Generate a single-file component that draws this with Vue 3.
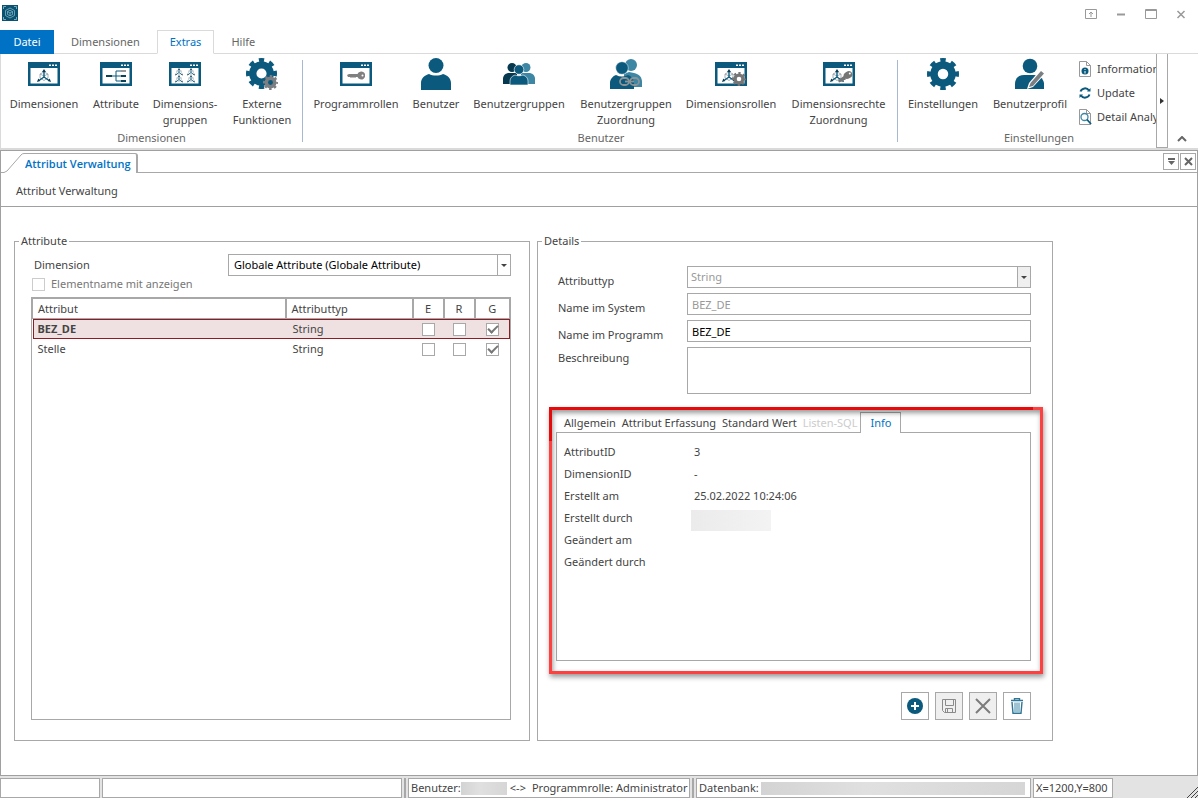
<script setup>
  import {ref} from 'vue';

  // ===Ribbon===
  const menu = ["Dimensionen", "Extras", "Hilfe"];
  const activeMenu = ref("Extras");

  const groups = [
    {
      key:"dim", title:"Dimensionen",
      items:[
        {icon:"win-axes", lines:["Dimensionen"]},
        {icon:"win-tree", lines:["Attribute"]},
        {icon:"win-group", lines:["Dimensions-", "gruppen"]},
        {icon:"gears", lines:["Externe", "Funktionen"]}
      ]
    },
    {
      key:"user", title:"Benutzer",
      items:[
        {icon:"win-key", lines:["Programmrollen"]},
        {icon:"user", lines:["Benutzer"]},
        {icon:"users", lines:["Benutzergruppen"]},
        {icon:"users-link", lines:["Benutzergruppen", "Zuordnung"]},
        {icon:"win-axes-gear", lines:["Dimensionsrollen"]},
        {icon:"win-axes-key", lines:["Dimensionsrechte", "Zuordnung"]}
      ]
    },
    {
      key:"set", title:"Einstellungen",
      items:[
        {icon:"gear", lines:["Einstellungen"]},
        {icon:"user-edit", lines:["Benutzerprofil"]}
      ],
      small:[
        {icon:"doc-info", text:"Information"},
        {icon:"refresh", text:"Update"},
        {icon:"doc-search", text:"Detail Analyse"}
      ]
    }
  ];

  // ===Attribute===
  const dimension = ref("Globale Attribute (Globale Attribute)");
  const showElementName = ref(false);
  const attributes = ref([
    {name:"BEZ_DE", type:"String", e:false, r:false, g:true},
    {name:"Stelle", type:"String", e:false, r:false, g:true}
  ]);
  const selected = ref("BEZ_DE");

  // ===Details===
  const attributeType = ref("String");
  const systemName = ref("BEZ_DE");
  const programName = ref("BEZ_DE");
  const description = ref("");

  const tabs = ["Allgemein", "Attribut Erfassung", "Standard Wert", "Listen-SQL", "Info"];
  const activeTab = ref("Info");
  const info = [
    {label:"AttributID", value:"3"},
    {label:"DimensionID", value:"-"},
    {label:"Erstellt am", value:"25.02.2022 10:24:06"},
    {label:"Erstellt durch", masked:true},
    {label:"Geändert am", value:""},
    {label:"Geändert durch", value:""}
  ];
</script>

<template>
  <!-- icon set -->
  <svg class="sprite" width="0" height="0" aria-hidden="true">
    <symbol id="axes" viewBox="0 0 16 14">
      <path d="M8 3l4 2v4l-4 2.500L4 9V5zM4 5l4 2 4-2" fill="none" stroke="#8a9aa2" stroke-width=".8"/>
      <path d="M8 8V2M8 8l-5 3.500M8 8l5 3.500" fill="none" stroke="#0b5a7d" stroke-width="1.400"/>
      <path d="M8 0l2 3H6zM1 13l1.300-3.500 2 2.500zM15 13l-1.300-3.500-2 2.500z" fill="#0b3a50"/>
    </symbol>
    <symbol id="win" viewBox="0 0 32 32">
      <path d="M0 4h32v24H0z" fill="#0b5a7d"/>
      <path d="M2.500 10h27v15.500h-27z" fill="#fff"/>
      <path d="M21 6.500h2v1.500h-2zM24 6.500h2v1.500h-2zM27 6.500h2v1.500h-2z" fill="#fff"/>
    </symbol>
    <symbol id="key" viewBox="0 0 18 9">
      <path d="M0 4l2-1h8.500A4 4 0 1 1 10.500 6H9L8 7 7 6 6 7 5 6 4 7 3 6H1z" fill="#808080"/>
      <circle cx="15.500" cy="4.500" r="1" fill="#fff"/>
    </symbol>
    <symbol id="gear-shape" viewBox="0 0 32 32">
      <circle cx="16" cy="16" r="9" fill="none" stroke="currentColor" stroke-width="7.500"/>
      <circle cx="16" cy="16" r="13.500" fill="none" stroke="currentColor" stroke-width="5" pathLength="16" stroke-dasharray="1 1" stroke-dashoffset=".5"/>
    </symbol>
    <symbol id="win-axes" viewBox="0 0 32 32">
      <use href="#win"/>
      <use href="#axes" x="8" y="11" width="16" height="14"/>
    </symbol>
    <symbol id="win-tree" viewBox="0 0 32 32">
      <use href="#win"/>
      <path d="M6 17h6v2H6zM21 17h5v2h-5zM21 22h5v2h-5z" fill="#0b4258"/>
      <path d="M21 12h5v2h-5z" fill="#999"/>
      <path d="M12 18h9M21 13h-5v10h5" fill="none" stroke="#0b5a7d"/>
    </symbol>
    <symbol id="win-group" viewBox="0 0 32 32">
      <use href="#win"/>
      <use href="#axes" x="5" y="10" width="10" height="8"/>
      <use href="#axes" x="17" y="10" width="10" height="8"/>
      <use href="#axes" x="5" y="17" width="10" height="8"/>
      <use href="#axes" x="17" y="17" width="10" height="8"/>
    </symbol>
    <symbol id="gears" viewBox="0 0 32 32">
      <use href="#gear-shape" width="31" height="31" color="#0b5a7d"/>
      <circle cx="24.500" cy="24" r="5" fill="#0b5a7d"/>
      <use href="#gear-shape" x="17" y="17" width="15" height="15" color="#7b7f82"/>
    </symbol>
    <symbol id="win-key" viewBox="0 0 32 32">
      <use href="#win"/>
      <use href="#key" x="7" y="13" width="18" height="9"/>
    </symbol>
    <symbol id="user" viewBox="0 0 32 32">
      <circle cx="16" cy="7.500" r="7.500" fill="#0b5a7d"/>
      <path d="M1 32v-7c0-5 4-8 8-9 4 2 10 2 14 0 4 1 8 4 8 9v7z" fill="#0b5a7d"/>
    </symbol>
    <symbol id="users" viewBox="0 0 32 32">
      <circle cx="9" cy="9.500" r="4.500" fill="#063850"/>
      <circle cx="23" cy="9.500" r="4.500" fill="#3d86a4"/>
      <path d="M0 26v-5c0-4 3-6 6-6h8v11z" fill="#063850"/>
      <path d="M32 26v-5c0-4-3-6-6-6h-8v11z" fill="#3d86a4"/>
      <circle cx="16" cy="11.500" r="4.800" fill="#0b5a7d" stroke="#fff" stroke-width=".6"/>
      <path d="M7 27v-4c0-3 2-5 5-6 2 1 6 1 8 0 3 1 5 3 5 6v4z" fill="#0b5a7d" stroke="#fff" stroke-width=".6"/>
    </symbol>
    <symbol id="users-link" viewBox="0 0 32 32">
      <circle cx="21" cy="7" r="6" fill="#3d86a4"/>
      <path d="M14 29V16l5-2 5 1c5 1 8 4 8 9v5z" fill="#3d86a4"/>
      <circle cx="12" cy="10" r="6.300" fill="#0b5a7d" stroke="#fff" stroke-width=".5"/>
      <path d="M0 31v-6c0-4 3-7 6-8 4 2 8 2 12 0 3 1 6 4 6 8v6z" fill="#0b5a7d"/>
      <rect x="10" y="20" width="9" height="7" rx="3.500" fill="none" stroke="#8b9396" stroke-width="1.800"/>
      <rect x="20" y="20" width="9" height="7" rx="3.500" fill="none" stroke="#8b9396" stroke-width="1.800"/>
      <path d="M15 23.500h9" stroke="#8b9396" stroke-width="1.800"/>
    </symbol>
    <symbol id="win-axes-gear" viewBox="0 0 32 32">
      <use href="#win"/>
      <use href="#axes" x="6" y="11" width="16" height="14"/>
      <circle cx="24" cy="21" r="5" fill="#fff"/>
      <use href="#gear-shape" x="17" y="14" width="14" height="14" color="#757575"/>
    </symbol>
    <symbol id="win-axes-key" viewBox="0 0 32 32">
      <use href="#win"/>
      <use href="#axes" x="6" y="11" width="16" height="14"/>
      <path d="M15 22.500l7-5.500 2.500 3-2 .5v1.500h-2v1.500h-2L16 24.500z" fill="#757575"/>
      <ellipse cx="25" cy="17" rx="4.500" ry="3.600" transform="rotate(-30 25 17)" fill="#757575"/>
      <circle cx="26.800" cy="15.600" r="1" fill="#fff"/>
    </symbol>
    <symbol id="gear" viewBox="0 0 32 32">
      <use href="#gear-shape" color="#0b5a7d"/>
    </symbol>
    <symbol id="user-edit" viewBox="0 0 32 32">
      <circle cx="16" cy="8" r="7.300" fill="#0b5a7d"/>
      <path d="M1 31v-5c0-6 4-9 9-9h10c5 0 9 3 10 8v6z" fill="#0b5a7d"/>
      <path d="M13 31l2-6L27 11l5 4-13 14z" fill="#fff"/>
      <path d="M15 29l1.500-4L27 13l3 2.500L19 28z" fill="#7b7f82"/>
    </symbol>
    <symbol id="doc-info" viewBox="0 0 16 16">
      <path d="M2.500.5h7l4 4v11h-11zM9.500.5v4h4" fill="#fff" stroke="#999"/>
      <circle cx="8" cy="10" r="3.500" fill="#0b5a7d"/>
      <path d="M8 8v1M8 10v2.500" stroke="#fff"/>
    </symbol>
    <symbol id="refresh" viewBox="0 0 16 16">
      <path d="M3.500 6.500a4.800 4.800 0 0 1 8.500-1M12.500 9.500a4.800 4.800 0 0 1-8.500 1" fill="none" stroke="#0b5a7d" stroke-width="2"/>
      <path d="M10 6.500h3.500V3zM6 9.500H2.500V13z" fill="#0b5a7d"/>
    </symbol>
    <symbol id="doc-search" viewBox="0 0 16 16">
      <path d="M2.500.5h7l4 4v11h-11zM9.500.5v4h4" fill="#fff" stroke="#999"/>
      <circle cx="7.500" cy="8" r="3.500" fill="#fff" stroke="#3d86a4" stroke-width="1.300"/>
      <path d="M10 10.500l4 4.500" stroke="#0b5a7d" stroke-width="1.800"/>
    </symbol>
  </svg>

  <div class="window">
    <header class="titlebar">
      <svg class="logo" viewBox="0 0 16 16" aria-hidden="true">
        <path d="M0 0h16v16H0z" fill="#0b5270"/>
        <path d="M1.500 4V1.500H4M12 1.500h2.500V4M14.500 12v2.500H12M4 14.500H1.500V12" fill="none" stroke="#8fc3d4" stroke-width=".8"/>
        <path d="M8 3l4.500 2.500v5L8 13l-4.500-2.500v-5zM5.500 6.500L8 5.300l2.500 1.200v3L8 10.800 5.500 9.500zM5.500 6.500L8 8l2.500-1.500M8 8v2.800" fill="none" stroke="#7db4c7" stroke-width=".8"/>
      </svg>
      <div class="window-buttons">
        <button aria-label="Menüband"><svg viewBox="0 0 12 12"><path d="M.5 1.500h11v9H.5zM6 9V4M4 6l2-2 2 2"/></svg></button>
        <button aria-label="Minimieren"><svg viewBox="0 0 12 12"><path d="M2 6.500h8" stroke-width="2"/></svg></button>
        <button aria-label="Maximieren"><svg viewBox="0 0 12 12"><path d="M.5 1.500h11v9H.5zM.5 2.500h11"/></svg></button>
        <button aria-label="Schließen"><svg viewBox="0 0 12 12"><path d="M2.500 3l7 7M9.500 3l-7 7" stroke-width="1.500"/></svg></button>
      </div>
    </header>

    <nav class="menu">
      <button class="menu__file">Datei</button>
      <button v-for="m in menu" :key="m" class="menu__tab" :class="{active: m === activeMenu}" @click="activeMenu = m">{{ m }}</button>
    </nav>

    <div class="ribbon">
      <div class="ribbon__groups">
        <section v-for="g in groups" :key="g.key" class="group" :class="'group--' + g.key">
          <div class="group__items">
            <button v-for="i in g.items" :key="i.icon" class="tool">
              <svg class="tool__icon"><use :href="'#' + i.icon"/></svg>
              <span v-for="l in i.lines" :key="l">{{ l }}</span>
            </button>
            <div v-if="g.small" class="small-tools">
              <button v-for="s in g.small" :key="s.text" class="small-tool">
                <svg class="small-tool__icon"><use :href="'#' + s.icon"/></svg>{{ s.text }}
              </button>
            </div>
          </div>
          <div class="group__title">{{ g.title }}</div>
        </section>
      </div>
      <button class="ribbon__scroll" aria-label="Weiter"><svg viewBox="0 0 4 6"><path d="M0 0l4 3-4 3z" fill="#333"/></svg></button>
      <button class="ribbon__collapse" aria-label="Menüband reduzieren"><svg viewBox="0 0 10 6"><path d="M1 5l4-4 4 4" fill="none" stroke="#666" stroke-width="2"/></svg></button>
    </div>

    <main class="workspace">
      <div class="doc-tabs">
        <div class="doc-tab">
          <svg class="doc-tab__edge" viewBox="0 0 20 20"><path d="M0 19.500L3 18 17 2Q18 .5 20 .5" fill="none" stroke="#a8a8a8"/></svg>
          <button class="doc-tab__name">Attribut Verwaltung</button>
        </div>
        <div class="doc-actions">
          <button aria-label="Fensterliste"><svg viewBox="0 0 9 9"><path d="M1 1h7v2H1zM1 4h7L4.500 8z" fill="#666"/></svg></button>
          <button aria-label="Tab schließen"><svg viewBox="0 0 9 9"><path d="M1 1l7 7M8 1L1 8" stroke="#666" stroke-width="2"/></svg></button>
        </div>
      </div>
      <div class="page-title">Attribut Verwaltung</div>

      <div class="content">
        <fieldset class="box box--list">
          <legend>Attribute</legend>
          <div class="dimension-row">
            <label for="dimension">Dimension</label>
            <div class="combo">
              <select id="dimension" v-model="dimension">
                <option>Globale Attribute (Globale Attribute)</option>
              </select>
              <span class="combo__arrow"></span>
            </div>
          </div>
          <label class="check-label">
            <input type="checkbox" v-model="showElementName" disabled>Elementname mit anzeigen
          </label>
          <div class="table-panel">
            <table>
              <thead>
                <tr>
                  <th class="col-name">Attribut</th>
                  <th class="col-type">Attributtyp</th>
                  <th class="col-flag">E</th>
                  <th class="col-flag">R</th>
                  <th class="col-last">G</th>
                </tr>
              </thead>
              <tbody>
                <tr v-for="a in attributes" :key="a.name" :class="{selected: a.name === selected}" @click="selected = a.name">
                  <td>{{ a.name }}</td>
                  <td class="type">{{ a.type }}</td>
                  <td class="flag"><input type="checkbox" v-model="a.e" :aria-label="a.name + ' E'"></td>
                  <td class="flag"><input type="checkbox" v-model="a.r" :aria-label="a.name + ' R'"></td>
                  <td class="flag"><input type="checkbox" v-model="a.g" :aria-label="a.name + ' G'"></td>
                </tr>
              </tbody>
            </table>
          </div>
        </fieldset>

        <fieldset class="box box--details">
          <legend>Details</legend>
          <div class="form">
            <label for="type">Attributtyp</label>
            <div class="combo combo--disabled">
              <select id="type" v-model="attributeType" disabled>
                <option>String</option>
              </select>
              <span class="combo__arrow"></span>
            </div>
            <label for="system">Name im System</label>
            <input id="system" type="text" v-model="systemName" disabled>
            <label for="program">Name im Programm</label>
            <input id="program" type="text" v-model="programName">
            <label for="description" class="label-top">Beschreibung</label>
            <textarea id="description" v-model="description"></textarea>
          </div>

          <div class="info">
            <div class="info__tabs" role="tablist">
              <button v-for="t in tabs" :key="t" role="tab" :class="{active: t === activeTab}" :disabled="t === 'Listen-SQL'" @click="activeTab = t">{{ t }}</button>
            </div>
            <dl class="info__panel">
              <template v-for="i in info" :key="i.label">
                <dt>{{ i.label }}</dt>
                <dd :class="{masked: i.masked}">{{ i.value }}</dd>
              </template>
            </dl>
            <div class="highlight"></div>
          </div>

          <div class="actions">
            <button aria-label="Neu"><svg viewBox="0 0 16 16"><circle cx="8" cy="8" r="8" fill="#0b5a7d"/><path d="M8 4v8M4 8h8" stroke="#fff" stroke-width="2"/></svg></button>
            <button aria-label="Speichern" disabled><svg viewBox="0 0 16 16"><path d="M1.500 1.500h13v13h-11l-2-2zM4.500 1.500v6h8v-6M4.500 14.500v-4h7v4M6.500 11v3" fill="none" stroke="#8a8a8a"/></svg></button>
            <button aria-label="Abbrechen" disabled><svg viewBox="0 0 16 16"><path d="M1 1l14 14M15 1L1 15" stroke="#7c7c7c" stroke-width="2"/></svg></button>
            <button aria-label="Löschen"><svg viewBox="0 0 16 16"><path d="M5.500 2V.5h5V2M2 2.500h12M3 4l1 11.300h8L13 4" fill="none" stroke="#2f7595" stroke-width="1.400"/><path d="M6 4.500v9.500M8 4.500v9.500M10 4.500v9.500" stroke="#3d86a4"/></svg></button>
          </div>
        </fieldset>
      </div>
    </main>

    <footer class="status">
      <div class="status__cell"></div>
      <div class="status__cell"></div>
      <span class="status__split"></span>
      <div class="status__cell">
        <span>Benutzer:</span><span class="mask mask--user"></span>
        <span class="status__arrow">&lt;-&gt;</span><span>Programmrolle: Administrator</span>
      </div>
      <span class="status__split"></span>
      <div class="status__cell"><span>Datenbank:</span><span class="mask mask--db"></span></div>
      <div class="status__cell">X=1200,Y=800</div>
      <svg class="status__grip" viewBox="0 0 12 12"><path d="M1 12L12 1M5 12l7-7M9 12l3-3" stroke="#444"/></svg>
    </footer>
  </div>
</template>

<style>
  body{
    margin: 0;
    background: #ffffff;
  }
</style>

<style scoped>
  /* ===Basis=== */
  .window{
    display: flex;
    flex-direction: column;
    min-height: 100vh;
    font-family: "Noto Sans", "Open Sans", sans-serif;
    font-size: 11px;
    line-height: 16px;
    color: #444444;
  }

  .window *{
    box-sizing: border-box;
  }

  .sprite{
    position: absolute;
  }

  button{
    padding: 0;
    border: 0;
    background: none;
    font: inherit;
    color: inherit;
    white-space: nowrap;
  }

  svg{
    display: block;
  }

  /* ===Titelleiste=== */
  .titlebar{
    display: flex;
    justify-content: space-between;
    height: 30px;
    padding: 5px 2px 0 2px;
  }

  .logo{
    width: 16px;
    height: 16px;
  }

  .window-buttons{
    display: flex;
    height: 18px;
  }

  .window-buttons button{
    display: grid;
    place-items: center;
    width: 30px;
  }

  .window-buttons svg{
    width: 12px;
    height: 12px;
    fill: none;
    stroke: #999999;
  }

  .menu{
    display: flex;
    height: 24px;
    border-bottom: 1px solid #dadada;
    color: #666666;
  }

  .menu__file{
    width: 54px;
    height: 24px;
    background: #0072c6;
    color: #ffffff;
  }

  .menu__tab{
    height: 24px;
    padding: 0 17px;
  }

  .menu__tab.active{
    padding: 0 12px;
    border: 1px solid #dadada;
    border-bottom-color: #ffffff;
    background: #ffffff;
    color: #0072c6;
  }

  /* ===Ribbon=== */
  .ribbon{
    display: flex;
    height: 96px;
    border-left: 1px solid #dadada;
    border-bottom: 2px solid #dadada;
  }

  .ribbon__groups{
    display: flex;
    flex: 1;
    min-width: 0;
    overflow: hidden;
  }

  .group{
    flex: none;
    padding: 4px 1px 0;
  }

  .group--dim{
    width: 301px;
  }

  .group--user{
    width: 595px;
    padding-left: 3px;
  }

  .group--set{
    width: 283px;
  }

  .group--user, .group--set{
    border-left: 1px solid #a9b8d2;
    border-image: linear-gradient(transparent 7px, #a9b8d2 7px, #a9b8d2 87px, transparent 87px) 1;
  }

  .group__items{
    display: grid;
    height: 72px;
  }

  .group--dim .group__items{
    grid-template-columns: 84px 60px 78px 76px;
  }

  .group--user .group__items{
    grid-template-columns: 100px 60px 106px 108px 102px 113px;
  }

  .group--set .group__items{
    grid-template-columns: 88px 86px 1fr;
  }

  .tool{
    display: flex;
    flex-direction: column;
    align-items: center;
  }

  .tool__icon{
    width: 32px;
    height: 32px;
    margin-bottom: 6px;
  }

  .group__title{
    text-align: center;
    color: #666666;
  }

  .small-tools{
    display: grid;
    align-content: start;
    margin-top: -1px;
    padding-left: 4px;
  }

  .small-tool{
    display: flex;
    align-items: center;
    gap: 4px;
    height: 24px;
  }

  .small-tool__icon{
    width: 16px;
    height: 16px;
  }

  .ribbon__scroll{
    display: grid;
    place-items: center;
    width: 12px;
    border: 1px solid #a8a8a8;
    border-top: 0;
  }

  .ribbon__scroll svg{
    width: 4px;
    height: 6px;
  }

  .ribbon__collapse{
    display: flex;
    align-items: flex-end;
    justify-content: center;
    width: 30px;
    padding: 0 3px 6px 0;
  }

  .ribbon__collapse svg{
    width: 10px;
    height: 6px;
  }

  /* ===Arbeitsbereich=== */
  .workspace{
    display: flex;
    flex: 1;
    flex-direction: column;
    border: 1px solid #a0a0a0;
  }

  .doc-tabs{
    display: flex;
    justify-content: space-between;
    height: 22px;
    padding: 2px 1px 0 3px;
    border-bottom: 1px solid #a8a8a8;
  }

  .doc-tab{
    display: flex;
    height: 20px;
    background: #ffffff;
  }

  .doc-tab__edge{
    width: 20px;
    height: 20px;
  }

  .doc-tab__name{
    padding: 0 5px 0 1px;
    border-top: 1px solid #a8a8a8;
    border-right: 2px solid #a8a8a8;
    border-radius: 0 3px 0 0;
    background: #ffffff;
    color: #0072c6;
    font-family: "Open Sans", "Noto Sans", sans-serif;
    font-weight: 600;
  }

  .doc-actions{
    display: flex;
    gap: 1px;
  }

  .doc-actions button{
    display: grid;
    place-items: center;
    width: 16px;
    height: 17px;
    border: 1px solid #a8a8a8;
  }

  .doc-actions svg{
    width: 9px;
    height: 9px;
  }

  .page-title{
    height: 34px;
    padding: 10px 15px 0;
    border-bottom: 1px solid #a0a0a0;
  }

  .content{
    display: grid;
    flex: 1;
    grid-template-columns: repeat(2, minmax(0, 1fr));
    gap: 7px;
    padding: 26px 144px 34px 13px;
  }

  .box{
    display: flex;
    flex-direction: column;
    min-width: 0;
    margin: 0;
    border: 1px solid #a8a8a8;
  }

  .box--list{
    padding: 5px 18px 20px 16px;
  }

  .box--details{
    padding: 17px 21px 20px 18px;
  }

  legend{
    margin-left: -12px;
    padding: 0 2px;
  }

  .box--details legend{
    margin-left: -14px;
  }

  /* ===Formularelemente=== */
  select, input[type="text"], textarea{
    width: 100%;
    height: 22px;
    margin: 0;
    padding: 0 4px;
    border: 1px solid #a8a8a8;
    border-radius: 0;
    outline: 0;
    background: #ffffff;
    color: #000000;
    font: inherit;
  }

  select{
    appearance: none;
    grid-area: 1 / 1;
    padding: 0 18px 0 5px;
  }

  select:disabled, input[type="text"]:disabled{
    color: #999999;
    opacity: 1;
  }

  select:disabled{
    padding-left: 3px;
  }

  textarea{
    display: block;
    height: 47px;
    resize: none;
  }

  .combo{
    display: grid;
  }

  .combo__arrow{
    display: grid;
    grid-area: 1 / 1;
    place-items: center;
    justify-self: end;
    width: 14px;
    border: 1px solid #a8a8a8;
    pointer-events: none;
  }

  .combo__arrow::before{
    content: "";
    border: 3px solid transparent;
    border-top-color: #444444;
    border-bottom: 0;
  }

  .combo--disabled .combo__arrow{
    background: #efefef;
  }

  input[type="checkbox"]{
    appearance: none;
    display: inline-grid;
    place-items: center;
    width: 13px;
    height: 13px;
    margin: 0;
    border: 1px solid #a8a8a8;
    background: #ffffff;
  }

  input[type="checkbox"]:disabled{
    border-color: #cccccc;
  }

  input[type="checkbox"]:checked::before{
    content: "";
    width: 8px;
    height: 4px;
    margin-bottom: 4px;
    border: solid #777777;
    border-width: 0 0 2px 2px;
    transform: rotate(-45deg);
  }

  /* ===Attributliste=== */
  .dimension-row{
    display: grid;
    grid-template-columns: 194px 1fr;
    align-items: center;
    padding-left: 3px;
  }

  .check-label{
    display: flex;
    align-items: center;
    gap: 6px;
    margin-left: 1px;
    color: #777777;
  }

  .table-panel{
    flex: 1;
    margin-top: 5px;
    border: 1px solid #a8a8a8;
  }

  table{
    width: 100%;
    border-collapse: collapse;
    table-layout: fixed;
  }

  th, td{
    height: 20px;
    padding: 0 5px;
    text-align: left;
    font-weight: normal;
  }

  th{
    border: 1px solid #a8a8a8;
    border-left-width: 2px;
  }

  th:first-child{
    border-left-width: 1px;
  }

  .type{
    padding-left: 7px;
  }

  .col-type{
    width: 127px;
  }

  .col-flag{
    width: 31px;
  }

  .col-last{
    width: 35px;
  }

  .col-flag, .col-last, .flag{
    padding: 0;
    text-align: center;
  }

  .flag{
    padding-left: 1px;
  }

  .flag input{
    vertical-align: middle;
  }

  .selected{
    background: #efe1e1;
    outline: 1px solid #8c1d24;
    outline-offset: -1px;
  }

  .selected td:first-child{
    font-weight: bold;
  }

  /* ===Details=== */
  .form{
    display: grid;
    grid-template-columns: 127px 1fr;
    gap: 5px 2px;
    padding-left: 2px;
  }

  .form label{
    padding-top: 8px;
    line-height: 14px;
  }

  .form .label-top{
    padding-top: 4px;
  }

  .info{
    position: relative;
    display: flex;
    flex: 1;
    flex-direction: column;
    margin-top: 18px;
  }

  .info__tabs{
    display: flex;
    height: 21px;
    padding-left: 5px;
  }

  .info__tabs button{
    height: 21px;
    padding: 0 3px;
  }

  .info__tabs button:disabled{
    color: #cccccc;
  }

  .info__tabs .active{
    padding: 0 9px;
    border: 1px solid #a8a8a8;
    border-bottom: 0;
    background: #ffffff;
    color: #0072c6;
    z-index: 1;
  }

  .info__panel{
    display: grid;
    flex: 1;
    grid-template-columns: 127px 1fr;
    grid-auto-rows: 22px;
    align-content: start;
    margin: -1px 0 0;
    padding: 8px 7px;
    border: 1px solid #a8a8a8;
    line-height: 22px;
  }

  dd{
    margin: 0;
    padding-left: 3px;
  }

  .masked{
    width: 80px;
    height: 21px;
    margin-top: 3px;
    background: linear-gradient(90deg, #ebebeb, #f3f3f3);
  }

  /* roter Rahmen liegt über dem Infobereich */
  .highlight{
    position: absolute;
    inset: -5px -12px -13px -7px;
    border: 3px solid #ff4040;
    box-shadow: 1px 3px 5px rgba(0, 0, 0, 0.4), inset 1px 3px 5px rgba(0, 0, 0, 0.4);
    pointer-events: none;
    z-index: 2;
  }

  .highlight::before{
    content: "";
    position: absolute;
    inset: -3px 7px auto -3px;
    height: 31px;
    border: solid #e80a0a;
    border-width: 3px 0 0 3px;
  }

  .actions{
    display: flex;
    justify-content: flex-end;
    gap: 6px;
    margin-top: 31px;
  }

  .actions button{
    display: grid;
    place-items: center;
    width: 28px;
    height: 28px;
    border: 1px solid #a8a8a8;
  }

  .actions button:disabled{
    background: #efefef;
  }

  .actions svg{
    width: 16px;
    height: 16px;
  }

  /* ===Statusleiste=== */
  .status{
    display: grid;
    grid-template-columns: 100px 300px 2px minmax(0, 282fr) 2px minmax(0, 335fr) 80px 83px;
    gap: 2px;
    height: 22px;
    padding-top: 2px;
    background: #e3e3e3;
  }

  .status__cell{
    display: flex;
    align-items: center;
    overflow: hidden;
    padding: 0 0 0 2px;
    border: 1px solid #a8a8a8;
    background: #ffffff;
    white-space: nowrap;
  }

  .status__split{
    background: #a8a8a8;
  }

  .status__arrow{
    margin: 0 6px 0 3px;
  }

  .mask{
    height: 13px;
    background: linear-gradient(90deg, #d3d3d3, #e0e0e0 40%, #d6d6d6);
  }

  .mask--user{
    flex: none;
    width: 46px;
  }

  .mask--db{
    flex: 1;
    margin: 0 5px 0 2px;
  }

  .status__grip{
    align-self: end;
    justify-self: end;
    width: 12px;
    height: 12px;
  }
</style>
